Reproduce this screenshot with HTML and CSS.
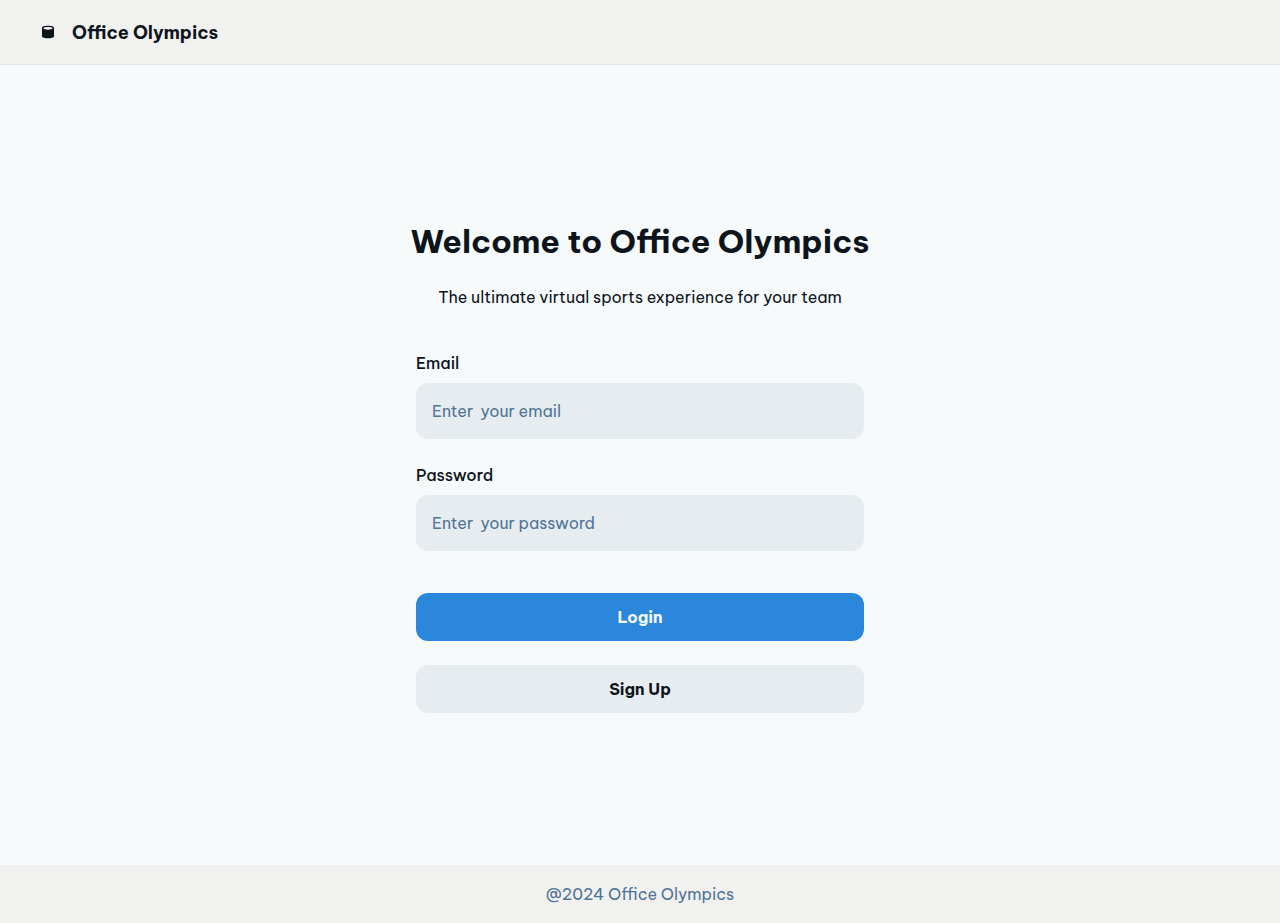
FILE: index.html
```html
<!DOCTYPE html>
<html lang="en">
<head>
<meta charset="utf-8">
<meta name="viewport" content="width=device-width, initial-scale=1">
<title>Office Olympics</title>
<link rel="stylesheet" href="styles.css">
</head>
<body>
<header class="header">
  <svg class="logo" viewBox="0 0 48 48" fill="currentColor" aria-hidden="true"><path fill-rule="evenodd" d="M24 5.500c-10 0-18 2.500-18 6v25c0 4 8 6.500 18 6.500s18-2.500 18-6.500v-25c0-3.500-8-6-18-6Zm0 3.500c7 0 14 1.500 14 4s-7 4-14 4-14-1.500-14-4 7-4 14-4Z"/></svg>
  <span class="brand">Office Olympics</span>
</header>
<main class="main">
  <h1 class="title">Welcome to Office Olympics</h1>
  <p class="subtitle">The ultimate virtual sports experience for your team</p>
  <form class="form">
    <div class="field">
      <label class="label" for="email">Email</label>
      <input class="input" id="email" type="email" placeholder="Enter  your email">
    </div>
    <div class="field">
      <label class="label" for="password">Password</label>
      <input class="input" id="password" type="password" placeholder="Enter  your password">
    </div>
    <div class="actions">
      <button class="button primary" type="submit">Login</button>
      <button class="button" type="button">Sign Up</button>
    </div>
  </form>
</main>
<footer class="footer">@2024 Office Olympics</footer>
</body>
</html>
```
FILE: styles.css
```css
* { box-sizing: border-box; }
body {
  margin: 0;
  min-height: 100vh;
  display: flex;
  flex-direction: column;
  background: #f6fafb;
  color: #0e141b;
  font: 16px/24px "Be Vietnam Pro", Inter, "Noto Sans", sans-serif;
}
.header {
  display: flex;
  align-items: center;
  gap: 16px;
  min-height: 65px;
  padding: 20px 40px;
  background: #f1f1ef;
  border-bottom: 1px solid #e2e8ea;
}
.logo { width: 16px; height: 16px; }
.brand { font-size: 18px; line-height: 23px; font-weight: 700; }
.main {
  flex: 1;
  display: flex;
  flex-direction: column;
  align-items: center;
  justify-content: center;
  padding: 20px 16px 16px;
}
.title {
  margin: 0 0 24px;
  font-size: 32px;
  line-height: 40px;
  font-weight: 700;
  text-align: center;
}
.subtitle { margin: 0 0 42px; text-align: center; }
.form { width: 100%; max-width: 448px; }
.field { display: flex; flex-direction: column; gap: 8px; margin-bottom: 24px; }
.label { font-weight: 500; }
.input {
  width: 100%;
  height: 56px;
  padding: 16px;
  border: 0;
  border-radius: 12px;
  background: #e7ecf0;
  color: #0e141b;
  font: inherit;
}
.input::placeholder { color: #507497; opacity: 1; white-space: pre; }
.actions { display: flex; flex-direction: column; gap: 24px; padding-top: 18px; }
.button {
  height: 48px;
  border: 0;
  border-radius: 12px;
  background: #e7ecf0;
  color: #0e141b;
  font: inherit;
  font-weight: 700;
  cursor: pointer;
}
.primary { background: #2b87db; color: #f6fafb; }
.footer { padding: 17px 16px; background: #f1f1ef; color: #507497; text-align: center; }
```
